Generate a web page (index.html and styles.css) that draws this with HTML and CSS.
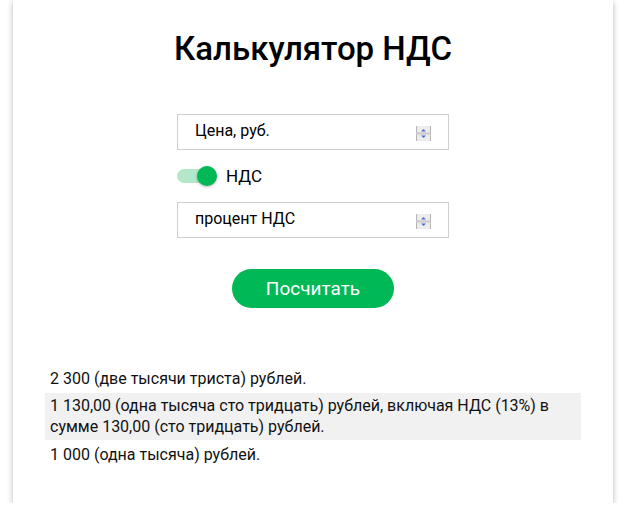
FILE: index.html
```html
<!DOCTYPE html>
<html lang="ru">
<head>
<meta charset="utf-8">
<title>Калькулятор НДС</title>
<link rel="stylesheet" href="styles.css">
</head>
<body>
<div class="card">
  <h1 class="title">Калькулятор НДС</h1>
  <div class="form">
    <div class="field">
      <span class="field-text">Цена, руб.</span>
      <svg class="spin" width="15" height="15" viewBox="0 0 15 15">
        <rect x="0" y="0" width="15" height="15" fill="#ececec"/>
        <line x1="0.5" y1="0" x2="0.5" y2="15" stroke="#b4b4b4"/>
        <line x1="14.5" y1="0" x2="14.5" y2="15" stroke="#b4b4b4"/>
        <rect x="0" y="6.5" width="15" height="2" fill="#c8c8c8"/>
        <path d="M5 5.5 L7.5 3 L10 5.5Z" fill="#4d6fd6"/>
        <path d="M5 9.5 L7.5 12 L10 9.5Z" fill="#4d6fd6"/>
      </svg>
    </div>
    <div class="toggle-row">
      <span class="switch"><span class="track"></span><span class="thumb"></span></span>
      <span class="toggle-label">НДС</span>
    </div>
    <div class="field">
      <span class="field-text">процент НДС</span>
      <svg class="spin" width="15" height="15" viewBox="0 0 15 15">
        <rect x="0" y="0" width="15" height="15" fill="#ececec"/>
        <line x1="0.5" y1="0" x2="0.5" y2="15" stroke="#b4b4b4"/>
        <line x1="14.5" y1="0" x2="14.5" y2="15" stroke="#b4b4b4"/>
        <rect x="0" y="6.5" width="15" height="2" fill="#c8c8c8"/>
        <path d="M5 5.5 L7.5 3 L10 5.5Z" fill="#4d6fd6"/>
        <path d="M5 9.5 L7.5 12 L10 9.5Z" fill="#4d6fd6"/>
      </svg>
    </div>
  </div>
  <div class="actions">
    <button class="btn" type="button">Посчитать</button>
  </div>
  <div class="results">
    <p class="row">2 300 (две тысячи триста) рублей.</p>
    <p class="row row-alt">1 130,00 (одна тысяча сто тридцать) рублей, включая НДС (13%) в сумме 130,00 (сто тридцать) рублей.</p>
    <p class="row">1 000 (одна тысяча) рублей.</p>
  </div>
</div>
</body>
</html>
```

FILE: styles.css
```css
html, body {
  margin: 0;
  padding: 0;
  background: #ffffff;
}

body {
  font-family: Roboto, "Noto Sans", Arial, sans-serif;
  color: #111111;
}

.card {
  box-sizing: border-box;
  width: 600px;
  margin-left: 13px;
  padding: 29px 32px 38px;
  background: #ffffff;
  box-shadow: 0 2px 6px rgba(0, 0, 0, 0.28);
}

.title {
  margin: 0;
  font-size: 33px;
  line-height: 40px;
  font-weight: 500;
  text-align: center;
  color: #000000;
}

.form {
  width: 272px;
  margin: 45px auto 0;
  display: flex;
  flex-direction: column;
  gap: 16px;
}

.field {
  box-sizing: border-box;
  height: 36px;
  border: 1px solid #cfcfcf;
  padding: 0 17px 0 17px;
  display: flex;
  align-items: center;
  justify-content: space-between;
}

.field-text {
  font-size: 16px;
  color: #000000;
  margin-top: -3px;
}

.spin {
  display: block;
  margin-top: 2px;
}

.toggle-row {
  display: flex;
  align-items: center;
  height: 20px;
  gap: 9px;
}

.switch {
  position: relative;
  width: 40px;
  height: 20px;
  flex: none;
}

.track {
  position: absolute;
  left: 0;
  top: 3px;
  width: 34px;
  height: 14px;
  border-radius: 7px;
  background: #b3e9c9;
}

.thumb {
  position: absolute;
  left: 20px;
  top: 0;
  width: 20px;
  height: 20px;
  border-radius: 50%;
  background: #00b956;
  box-shadow: 0 1px 3px rgba(0, 0, 0, 0.3);
}

.toggle-label {
  font-size: 17px;
  color: #000000;
}

.actions {
  display: flex;
  justify-content: center;
  margin-top: 31px;
}

.btn {
  width: 162px;
  height: 39px;
  border: none;
  border-radius: 20px;
  background: #00b956;
  color: #ffffff;
  font-family: Roboto, "Noto Sans", Arial, sans-serif;
  font-size: 19px;
  padding: 0;
  cursor: pointer;
}

.results {
  margin-top: 60px;
  display: flex;
  flex-direction: column;
  gap: 4px;
}

.row {
  margin: 0;
  padding: 0 5px;
  font-size: 16px;
  line-height: 21px;
}

.row-alt {
  background: #f1f1f1;
  padding-top: 2px;
  padding-bottom: 3px;
}
```
